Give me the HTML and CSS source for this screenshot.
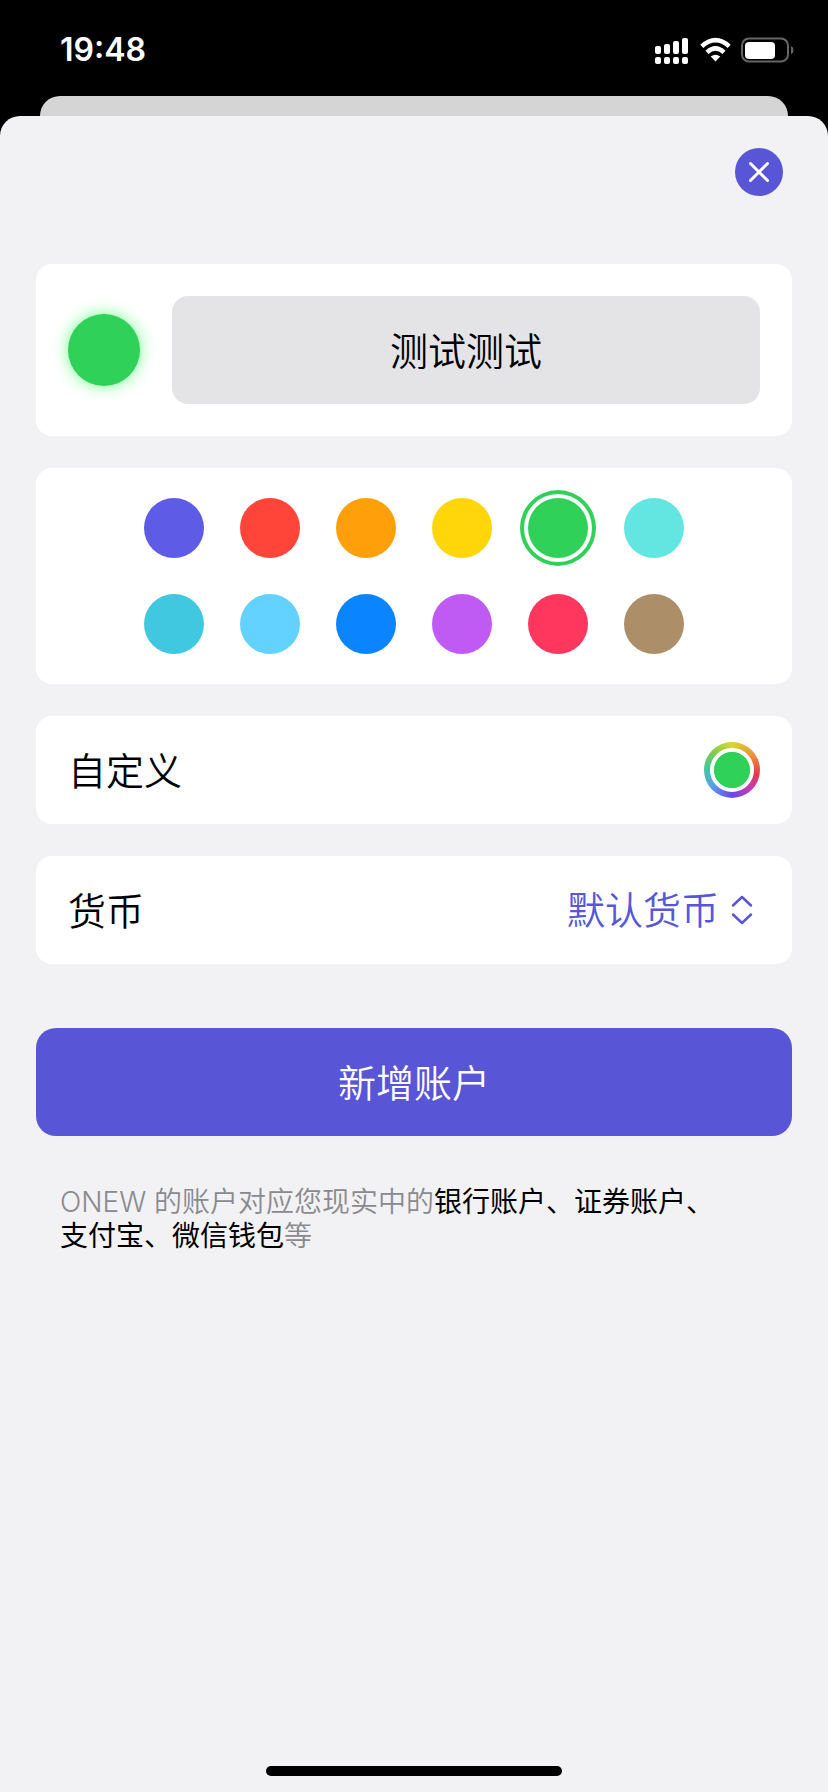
FILE: index.html
```html
<!DOCTYPE html>
<html lang="zh-CN">
<head>
<meta charset="utf-8">
<meta name="viewport" content="width=device-width, initial-scale=1">
<title>新增账户</title>
<link rel="stylesheet" href="styles.css">
</head>
<body>
<header class="status">
  <time class="clock">19:48</time>
  <svg class="status-icons" width="140" height="28" viewBox="0 0 140 28" aria-hidden="true">
    <g fill="#fff">
      <rect x="1" y="10" width="6" height="8" rx="2"/>
      <rect x="10" y="8" width="6" height="10" rx="2"/>
      <rect x="19" y="5" width="6" height="13" rx="2"/>
      <rect x="28" y="2" width="6" height="16" rx="2"/>
      <rect x="1" y="21" width="6" height="7" rx="2"/>
      <rect x="10" y="21" width="6" height="7" rx="2"/>
      <rect x="19" y="21" width="6" height="7" rx="2"/>
      <rect x="28" y="21" width="6" height="7" rx="2"/>
      <path d="M61.500 25.500 L56.700 20.500 Q61.500 16.800 66.300 20.500 Z"/>
    </g>
    <g fill="none" stroke="#fff" stroke-width="4.500">
      <path d="M47.800 10.300 Q61.500 -2 75.200 10.300"/>
      <path d="M53 16.300 Q61.500 8.600 70 16.300"/>
    </g>
    <rect x="88" y="2.500" width="46" height="23" rx="7" fill="none" stroke="#666" stroke-width="2"/>
    <rect x="91" y="6" width="30" height="17" rx="4" fill="#fff"/>
    <path d="M137 10 Q139.500 11 139.500 14 T137 18 Z" fill="#666"/>
  </svg>
</header>
<div class="backdrop"></div>
<main class="sheet">
  <form class="form">
    <div class="toolbar">
      <button class="close" type="button" aria-label="关闭">
        <svg width="24" height="24" viewBox="0 0 24 24" fill="none" stroke="#fff" stroke-width="3" stroke-linecap="round" aria-hidden="true"><path d="M3.500 3.500 L20.500 20.500 M20.500 3.500 L3.500 20.500"/></svg>
      </button>
    </div>

    <div class="card name-card">
      <span class="preview"></span>
      <input class="name" type="text" value="测试测试" aria-label="账户名称">
    </div>

    <div class="card palette" role="radiogroup" aria-label="颜色">
      <input class="swatch indigo" type="radio" name="color" aria-label="靛蓝">
      <input class="swatch red" type="radio" name="color" aria-label="红色">
      <input class="swatch orange" type="radio" name="color" aria-label="橙色">
      <input class="swatch yellow" type="radio" name="color" aria-label="黄色">
      <input class="swatch green" type="radio" name="color" aria-label="绿色" checked>
      <input class="swatch mint" type="radio" name="color" aria-label="薄荷">
      <input class="swatch teal" type="radio" name="color" aria-label="青色">
      <input class="swatch cyan" type="radio" name="color" aria-label="浅蓝">
      <input class="swatch blue" type="radio" name="color" aria-label="蓝色">
      <input class="swatch purple" type="radio" name="color" aria-label="紫色">
      <input class="swatch pink" type="radio" name="color" aria-label="粉色">
      <input class="swatch brown" type="radio" name="color" aria-label="棕色">
    </div>

    <div class="card row">
      <label class="label" for="custom">自定义</label>
      <span class="well"><input class="well-color" id="custom" type="color" value="#30d158"></span>
    </div>

    <div class="card row">
      <label class="label" for="currency">货币</label>
      <span class="picker">
        <select class="currency" id="currency"><option>默认货币</option></select>
        <svg width="24" height="32" viewBox="0 0 24 32" fill="none" stroke="#5856d6" stroke-width="2.500" stroke-linecap="round" stroke-linejoin="round" aria-hidden="true"><path d="M3 11.500 L12 3 L21 11.500 M3 20.500 L12 29 L21 20.500"/></svg>
      </span>
    </div>

    <button class="submit" type="submit">新增账户</button>
    <p class="note">ONEW 的账户对应您现实中的<strong class="strong">银行账户、证券账户、支付宝、微信钱包</strong>等</p>
  </form>
  <div class="home"></div>
</main>
</body>
</html>
```
FILE: styles.css
```css
* {
  box-sizing: border-box;
}

body {
  margin: 0;
  min-height: 100vh;
  display: flex;
  flex-direction: column;
  background: #000;
  color: #000;
  font-family: Inter, "Noto Sans CJK SC", sans-serif;
  font-size: 38px;
  font-weight: 350;
}

button,
input,
select {
  margin: 0;
  padding: 0;
  border: 0;
  appearance: none;
  font: inherit;
}

.status {
  display: flex;
  justify-content: space-between;
  align-items: center;
  height: 96px;
  padding: 3px 34px 0 60px;
  color: #fff;
}

.clock {
  font-size: 32px;
  font-weight: 600;
}

.backdrop {
  height: 40px;
  margin: 0 40px -20px;
  border-radius: 20px 20px 0 0;
  background: #d5d5d6;
}

.sheet {
  position: relative;
  flex: 1;
  display: flex;
  flex-direction: column;
  padding: 32px 36px 16px;
  border-radius: 20px 20px 0 0;
  background: #f2f2f5;
}

.form {
  display: flex;
  flex-direction: column;
  gap: 32px;
}

.toolbar {
  display: flex;
  justify-content: flex-end;
  padding: 0 9px 36px 0;
}

.close {
  display: grid;
  place-items: center;
  width: 48px;
  height: 48px;
  border-radius: 50%;
  background: #5856d6;
}

.card {
  border-radius: 16px;
  background: #fff;
}

.name-card {
  display: flex;
  align-items: center;
  gap: 32px;
  padding: 32px;
}

.preview {
  flex: none;
  width: 72px;
  height: 72px;
  border-radius: 50%;
  background: #30d158;
  box-shadow: 0 0 16px #30ff58aa;
}

.name {
  flex: 1;
  min-width: 0;
  height: 108px;
  padding-bottom: 4px;
  border-radius: 16px;
  background: #e4e4e6;
  color: #000;
  text-align: center;
}

.palette {
  display: grid;
  grid-template-columns: repeat(6, 60px);
  justify-content: center;
  gap: 36px;
  padding: 30px;
}

.swatch {
  width: 60px;
  height: 60px;
  border-radius: 50%;
}

.swatch:checked {
  box-shadow: 0 0 0 4px #fff, 0 0 0 8px #30d158;
}

.indigo { background: #5e5ce6; }
.red { background: #ff453a; }
.orange { background: #ff9f0a; }
.yellow { background: #ffd60a; }
.green { background: #30d158; }
.mint { background: #63e6e2; }
.teal { background: #40c8e0; }
.cyan { background: #64d2ff; }
.blue { background: #0a84ff; }
.purple { background: #bf5af2; }
.pink { background: #ff375f; }
.brown { background: #ac8e68; }

.row {
  display: flex;
  justify-content: space-between;
  align-items: center;
  height: 108px;
  padding: 0 32px;
}

.label {
  padding-bottom: 4px;
}

.well {
  display: grid;
  place-items: center;
  width: 56px;
  height: 56px;
  border-radius: 50%;
  background: conic-gradient(#d8d82c, #f0883a 60deg, #e23a50 100deg, #c43cb4 135deg, #6a48e8 180deg, #58a0f0 230deg, #3cc8a0 270deg, #84cc50 315deg, #d8d82c);
}

.well-color {
  width: 44px;
  height: 44px;
  border: 4px solid #fff;
  border-radius: 50%;
  background: #30d158;
  overflow: hidden;
}

.well-color::-webkit-color-swatch-wrapper {
  padding: 0;
}

.well-color::-webkit-color-swatch {
  border: 0;
  border-radius: 50%;
}

.picker {
  display: flex;
  align-items: center;
  gap: 10px;
  padding-right: 6px;
}

.currency {
  background: transparent;
  color: #5856d6;
}

.submit {
  height: 108px;
  margin-top: 32px;
  padding-bottom: 4px;
  border-radius: 20px;
  background: #5856d6;
  color: #fff;
}

.note {
  margin: 17px 64px 0 24px;
  color: #8a8a8e;
  font-size: 28px;
  line-height: 34px;
}

.strong {
  color: #000;
  font-weight: 400;
}

.home {
  width: 296px;
  height: 10px;
  margin: auto auto 0;
  border-radius: 5px;
  background: #000;
}
```
